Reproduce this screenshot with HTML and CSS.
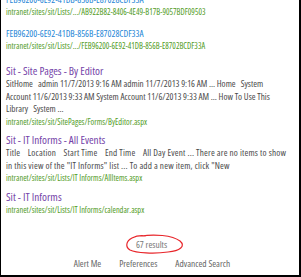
FILE: index.html
```html
<!DOCTYPE html>
<html>
<head>
<meta charset="utf-8">
<link rel="stylesheet" href="styles.css">
</head>
<body>
<div class="frame">
  <div class="results">
    <div class="result">
      <a class="title link">FEB96200-6E92-41DB-856B-E87028CDF33A</a>
      <div class="url">intranet/sites/sit/Lists/.../AB922B82-8406-4E49-B17B-9057BDF09503</div>
    </div>
    <div class="result spaced">
      <a class="title link">FEB96200-6E92-41DB-856B-E87028CDF33A</a>
      <div class="url">intranet/sites/sit/Lists/.../FEB96200-6E92-41DB-856B-E8702BCDF33A</div>
    </div>
    <div class="result">
      <a class="title visited">Sit - Site Pages - By Editor</a>
      <div class="desc">SitHome &nbsp; admin 11/7/2013 9:16 AM admin 11/7/2013 9:16 AM ... Home &nbsp; System Account 11/6/2013 9:33 AM System Account 11/6/2013 9:33 AM ... How To Use This Library &nbsp; System ...</div>
      <div class="url">intranet/sites/sit/SitePages/Forms/ByEditor.aspx</div>
    </div>
    <div class="result">
      <a class="title visited">Sit - IT Informs - All Events</a>
      <div class="desc loose">Title &nbsp; &nbsp;Location &nbsp; &nbsp;Start Time &nbsp; &nbsp;End Time &nbsp; &nbsp;All Day Event ... There are no items to show in this view of the "IT Informs" list ... To add a new item, click "New</div>
      <div class="url">intranet/sites/sit/Lists/IT Informs/AllItems.aspx</div>
    </div>
    <div class="result">
      <a class="title visited">Sit - IT Informs</a>
      <div class="url">intranet/sites/sit/Lists/IT Informs/calendar.aspx</div>
    </div>
  </div>
  <div class="count">
    <span class="count-text">67 results<svg class="circle" width="62" height="22" viewBox="0 0 62 22"><path d="M17 3 C30 1 48 2 56 8 C62 13 56 18 44 19 C30 21 12 20 6 17 C1 14 2 8 8 5 C12 3 16 2 22 3" fill="none" stroke="#e8262b" stroke-width="1.2"/></svg></span>
  </div>
  <div class="footer">
    <a class="foot-link">Alert Me</a>
    <a class="foot-link">Preferences</a>
    <a class="foot-link">Advanced Search</a>
  </div>
</div>
</body>
</html>
```

FILE: styles.css
```css
html, body {
  margin: 0;
  padding: 0;
  background: #fff;
}
.frame {
  box-sizing: border-box;
  width: 301px;
  height: 277px;
  border-left: 1px solid #000;
  border-right: 2px solid #000;
  border-bottom: 2px solid #000;
  overflow: hidden;
  font-family: "Open Sans", "Noto Sans", sans-serif;
  font-stretch: 75%;
  display: flex;
  flex-direction: column;
  padding-bottom: 5px;
}
.results {
  margin-top: -6px;
  padding-left: 5px;
  padding-right: 12px;
  display: flex;
  flex-direction: column;
  gap: 5.5px;
}
.result {
  display: flex;
  flex-direction: column;
}
.spaced {
  margin-top: 4.5px;
  margin-bottom: 6.5px;
}
.title {
  font-size: 11.2px;
  line-height: 14px;
}
.link { color: #2386d6; }
.visited { color: #7443a8; }
.desc {
  font-size: 9.2px;
  line-height: 12.5px;
  color: #4a4a4a;
}
.loose { letter-spacing: 0.18px; }
.url {
  font-size: 8.3px;
  line-height: 12px;
  color: #4f9a1c;
}
.link.title {
  font-size: 9.25px;
  line-height: 12px;
}
.count {
  margin-top: auto;
  display: flex;
  justify-content: center;
  font-size: 9.4px;
  line-height: 13px;
  color: #777;
}
.count-text {
  position: relative;
  margin-left: 3px;
}
.circle {
  position: absolute;
  left: -12px;
  top: -5px;
}
.footer {
  margin-top: 6px;
  display: flex;
  justify-content: center;
  gap: 18px;
  padding-left: 4px;
  font-size: 9.4px;
  line-height: 13px;
  color: #666;
}
```
